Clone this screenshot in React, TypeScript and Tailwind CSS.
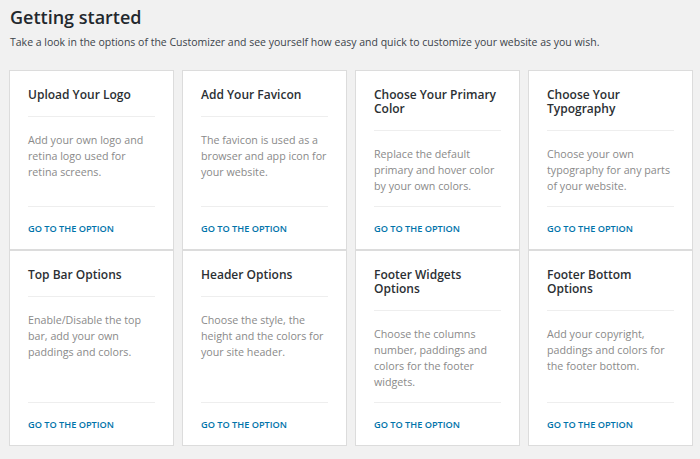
const cards = [
  {
    title: 'Upload Your Logo',
    text: 'Add your own logo and retina logo used for retina screens.',
  },
  {
    title: 'Add Your Favicon',
    text: 'The favicon is used as a browser and app icon for your website.',
  },
  {
    title: 'Choose Your Primary Color',
    text: 'Replace the default primary and hover color by your own colors.',
  },
  {
    title: 'Choose Your Typography',
    text: 'Choose your own typography for any parts of your website.',
  },
  {
    title: 'Top Bar Options',
    text: 'Enable/Disable the top bar, add your own paddings and colors.',
  },
  {
    title: 'Header Options',
    text: 'Choose the style, the height and the colors for your site header.',
  },
  {
    title: 'Footer Widgets Options',
    text: 'Choose the columns number, paddings and colors for the footer widgets.',
  },
  {
    title: 'Footer Bottom Options',
    text: 'Add your copyright, paddings and colors for the footer bottom.',
  },
];

function OptionCard({ title, text }: { title: string; text: string }) {
  return (
    <div className="flex flex-col bg-white border border-[#dcdcdc] px-[18px]">
      <h3 className="pt-[17px] pb-[14px] border-b border-[#eeeeee] text-[12px] leading-[14px] font-semibold text-[#2b2f33]">
        {title}
      </h3>
      <p className="mt-[15px] mb-[12px] text-[10.7px] leading-4 text-[#8a8a8a]">{text}</p>
      <div className="mt-auto border-t border-[#eeeeee] pt-[16px] pb-[14px]">
        <a href="#" className="block text-[9.2px] leading-3 font-semibold uppercase text-[#0073aa]">
          Go to the option
        </a>
      </div>
    </div>
  );
}

export default function App() {
  return (
    <div
      className="min-h-[459px] w-[700px] bg-[#f1f1f1] pl-[9px] pr-[7px] pt-[5px]"
      style={{ fontFamily: '"Open Sans", "Noto Sans", sans-serif' }}
    >
      <h1 className="pl-[1px] text-[18px] leading-[24px] font-semibold text-[#23282d]">Getting started</h1>
      <p className="mt-[6px] pl-[1px] text-[10.5px] leading-[14px] text-[#3c434a]">
        Take a look in the options of the Customizer and see yourself how easy and quick to customize your website as you wish.
      </p>
      <div className="mt-[21px] grid grid-cols-4 gap-x-2">
        {cards.map((c) => (
          <OptionCard key={c.title} title={c.title} text={c.text} />
        ))}
      </div>
    </div>
  );
}
